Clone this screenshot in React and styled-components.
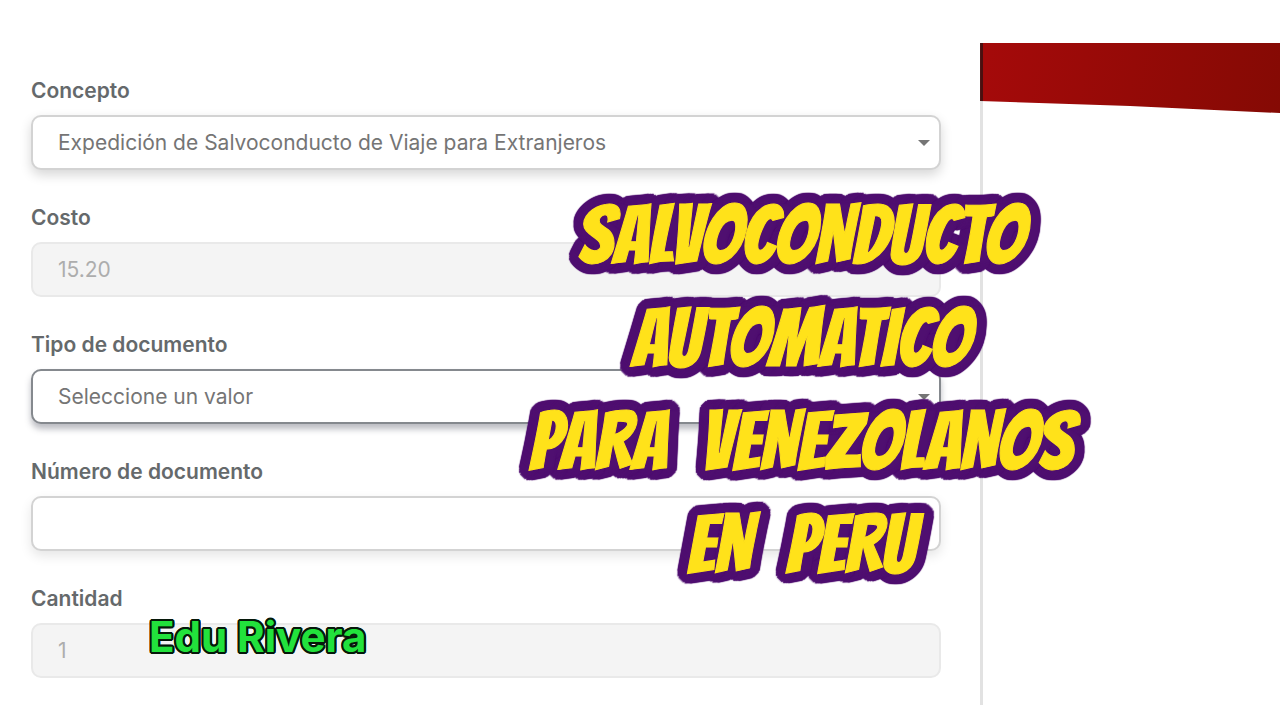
import React, { useState } from 'react';
import styled, { createGlobalStyle } from 'styled-components';

const GlobalStyle = createGlobalStyle`
  * {
    box-sizing: border-box;
  }

  body {
    margin: 0;
    background-color: #fff;
    font-family: Inter, 'Liberation Sans', sans-serif;
  }
`;

// Outline built from shadows so the corners stay round
const outline = (radius, blur, color, steps) =>
  Array.from({ length: steps }, (_, i) => {
    const angle = (i / steps) * Math.PI * 2;
    const x = Math.round(Math.cos(angle) * radius);
    const y = Math.round(Math.sin(angle) * radius);
    return `${x}px ${y}px ${blur}px ${color}`;
  }).join(', ');

const Page = styled.div`
  position: relative;
  padding: 43px 0 15px;
  overflow: hidden;
`;

const Layout = styled.main`
  display: grid;
  grid-template-columns: 76.8% 1fr;
`;

const Form = styled.form`
  display: flex;
  flex-direction: column;
  gap: 32px;
  padding: 32px 39px 27px 31px;
  border-right: 3px solid #e2e2e2;
`;

const Field = styled.div`
  display: flex;
  flex-direction: column;
  gap: 8px;
`;

const Label = styled.label`
  font-size: 21px;
  font-weight: 600;
  line-height: 32px;
  color: #65696b;
`;

const controlStyles = `
  display: block;
  width: 100%;
  height: 55px;
  margin: 0;
  padding: 0 25px;
  border: 2px solid #d3d3d3;
  border-radius: 10px;
  background-color: #fff;
  box-shadow: 0 5px 12px rgba(0, 0, 0, 0.1);
  font-family: inherit;
  font-size: 21px;
  color: #757575;
  outline: none;
`;

const Input = styled.input`
  ${controlStyles}

  &:disabled {
    border-color: #e9e9e9;
    background-color: #f4f4f4;
    box-shadow: none;
    color: #adadad;
    opacity: 1;
  }
`;

const SelectWrapper = styled.div`
  position: relative;

  &::after {
    content: '';
    position: absolute;
    top: 25px;
    right: 11px;
    border-top: 6px solid #757575;
    border-left: 6px solid transparent;
    border-right: 6px solid transparent;
    pointer-events: none;
  }
`;

const Select = styled.select`
  ${controlStyles}
  appearance: none;
  border-color: ${({ $active }) => ($active ? '#85898e' : '#d3d3d3')};
  box-shadow: ${({ $active }) =>
    $active ? '0 5px 6px rgba(60, 64, 80, 0.35)' : '0 5px 12px rgba(0, 0, 0, 0.16)'};
`;

const Banner = styled.div`
  height: 70px;
  margin-left: -3px;
  border-left: 3px solid #4a1010;
  background: linear-gradient(100deg, #a50a0a, #850a04);
  clip-path: polygon(0 0, 100% 0, 100% 100%, 50% 90%, 0 83%);
`;

const Headline = styled.h1`
  position: absolute;
  top: 184px;
  left: 62.6%;
  display: flex;
  flex-direction: column;
  align-items: center;
  margin: 0;
  transform: translateX(-50%);
  font-family: Bangers, 'Open Sans', sans-serif;
  font-size: 82px;
  font-weight: 400;
  line-height: 103px;
  color: #ffe21a;
  -webkit-text-stroke: 1px #ffe21a;
  text-shadow: ${outline(10, 1, '#4f0f70', 40)};
  pointer-events: none;
`;

const HeadlineRow = styled.span`
  display: flex;
  gap: 34px;
  white-space: nowrap;
`;

const Author = styled.p`
  position: absolute;
  top: 612px;
  left: 149px;
  margin: 0;
  font-size: 42px;
  font-weight: 700;
  line-height: 50px;
  color: #22e23c;
  text-shadow: ${outline(2, 0, '#06180a', 12)};
  pointer-events: none;
`;

const headline = [['SALVOCONDUCTO'], ['AUTOMATICO'], ['PARA', 'VENEZOLANOS'], ['EN', 'PERU']];

const App = () => {
  const [concepto, setConcepto] = useState('salvoconducto');
  const [tipo, setTipo] = useState('');
  const [numero, setNumero] = useState('');

  return (
    <>
      <GlobalStyle />
      <Page>
        <Layout>
          <Form>
            <Field>
              <Label htmlFor="concepto">Concepto</Label>
              <SelectWrapper>
                <Select id="concepto" value={concepto} onChange={(e) => setConcepto(e.target.value)}>
                  <option value="salvoconducto">Expedición de Salvoconducto de Viaje para Extranjeros</option>
                </Select>
              </SelectWrapper>
            </Field>

            <Field>
              <Label htmlFor="costo">Costo</Label>
              <Input id="costo" type="text" value="15.20" disabled />
            </Field>

            <Field>
              <Label htmlFor="tipo">Tipo de documento</Label>
              <SelectWrapper>
                <Select id="tipo" $active value={tipo} onChange={(e) => setTipo(e.target.value)}>
                  <option value="">Seleccione un valor</option>
                </Select>
              </SelectWrapper>
            </Field>

            <Field>
              <Label htmlFor="numero">Número de documento</Label>
              <Input id="numero" type="text" value={numero} onChange={(e) => setNumero(e.target.value)} />
            </Field>

            <Field>
              <Label htmlFor="cantidad">Cantidad</Label>
              <Input id="cantidad" type="text" value="1" disabled />
            </Field>
          </Form>
          <Banner />
        </Layout>

        {/* Titles over the form */}
        <Headline>
          {headline.map((words) => (
            <HeadlineRow key={words[0]}>
              {words.map((word) => (
                <span key={word}>{word}</span>
              ))}
            </HeadlineRow>
          ))}
        </Headline>
        <Author>Edu Rivera</Author>
      </Page>
    </>
  );
};

export default App;
